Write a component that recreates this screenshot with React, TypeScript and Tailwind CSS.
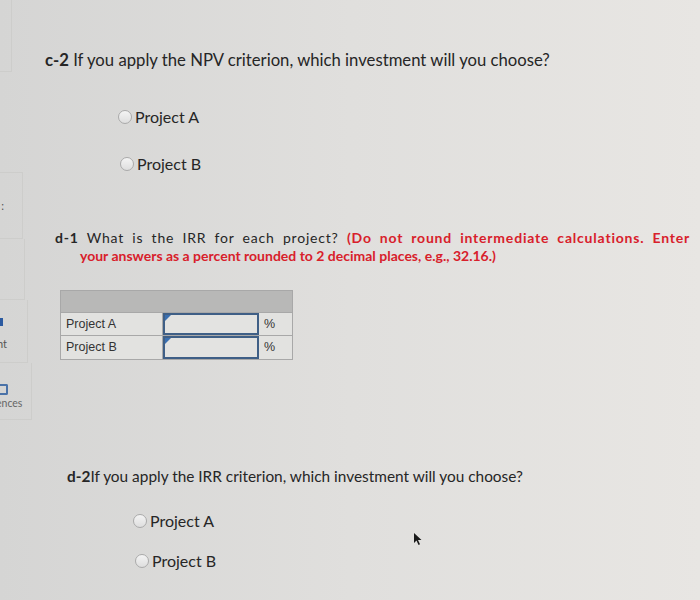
import React from 'react';

function Radio({ label, className }: { label: string; className?: string }) {
  return (
    <label className={`flex items-center gap-[3px] h-[20px] ${className ?? ''}`}>
      <span className="w-[14px] h-[14px] rounded-full border border-[#aaaaaa] bg-linear-to-b from-[#f4f4f4] to-[#dedede] flex-none" />
      <span className="text-[16px] text-[#262626]">{label}</span>
    </label>
  );
}

function IrrRow({ name, last }: { name: string; last?: boolean }) {
  return (
    <div className={`flex h-[23px] ${last ? '' : 'border-b border-[#a8a8a8]'}`}>
      <div className="w-[102px] border-r border-[#a8a8a8] px-[5px] flex items-center text-[12.5px] text-[#333]">
        {name}
      </div>
      <div className="relative w-[96px] border-2 border-[#3f5f86] bg-[#e3e3e1]">
        <span className="absolute left-0 top-0 w-0 h-0 border-t-[6px] border-r-[6px] border-t-[#3a6fb0] border-r-transparent" />
      </div>
      <div className="flex-1 flex items-center px-[5px] text-[12.5px] text-[#333]">%</div>
    </div>
  );
}

export default function App() {
  return (
    <div
      className="relative w-[700px] h-[600px] overflow-hidden flex bg-linear-to-r from-[#d5d5d4] via-[#e0dfdd] to-[#e8e6e3]"
      style={{ fontFamily: 'Lato, "Open Sans", sans-serif' }}
    >
      {/* partially visible left nav column */}
      <div className="flex-none w-[36px] flex flex-col text-[#555]">
        <div className="h-[72px] w-[12px] border-r border-b border-[#cdcdcb]" />
        <div className="h-[100px]" />
        <div className="h-[67px] w-[23px] border-r border-y border-[#cdcdcb] flex items-center justify-end pr-[18px]">
          <span className="text-[11px] leading-none">:</span>
        </div>
        <div className="h-[61px] w-[25px] border-r border-b border-[#cdcdcb]" />
        <div className="h-[63px] w-[28px] border-r border-b border-[#cdcdcb] flex flex-col pt-[18px] overflow-hidden">
          <div className="w-[3px] h-[8px] bg-[#2b5aa0]" />
          <div className="mt-[12px] text-[11px] leading-none -ml-[3px]">nt</div>
        </div>
        <div className="h-[57px] w-[32px] border-r border-b border-[#cdcdcb] flex flex-col pt-[21px] overflow-hidden">
          <div className="w-[8px] h-[11px] border-r-2 border-y-2 border-[#4a72a8] rounded-r-[2px]" />
          <div className="mt-[3px] text-[10.5px] leading-none -ml-[4px] text-[#666]">ences</div>
        </div>
      </div>

      <div className="flex-1 flex flex-col text-[#262626]">
        <p className="mt-[48px] ml-[9px] h-[24px] text-[16.7px] leading-[24px]">
          <b>c-2</b> If you apply the NPV criterion, which investment will you choose?
        </p>
        <Radio label="Project A" className="mt-[35px] ml-[82px]" />
        <Radio label="Project B" className="mt-[27px] ml-[84px]" />

        <div className="mt-[55px] ml-[19px] w-[635px] text-[14px] leading-[18px]">
          <p className="text-justify [text-align-last:justify] tracking-[0.8px]">
            <b>d-1</b> What is the IRR for each project?{' '}
            <b className="text-[#d8202b]">(Do not round intermediate calculations. Enter</b>
          </p>
          <p className="pl-[25px] font-bold text-[#d8202b]">
            your answers as a percent rounded to 2 decimal places, e.g., 32.16.)
          </p>
        </div>

        <div
          className="mt-[25px] ml-[24px] w-[233px] border border-[#a8a8a8] bg-[#e2e2e0]"
          style={{ fontFamily: '"Liberation Sans", Arial, sans-serif' }}
        >
          <div className="h-[22px] bg-[#b8b8b7] border-b border-[#a8a8a8]" />
          <IrrRow name="Project A" />
          <IrrRow name="Project B" last />
        </div>

        <p className="mt-[105px] ml-[31px] h-[22px] text-[15.4px] leading-[22px]">
          <b>d-2</b>If you apply the IRR criterion, which investment will you choose?
        </p>
        <Radio label="Project A" className="mt-[24px] ml-[97px]" />
        <Radio label="Project B" className="mt-[20px] ml-[99px]" />
      </div>

      {/* mouse pointer */}
      <svg className="absolute left-[413px] top-[532px]" width="10" height="14" viewBox="0 0 10 14">
        <path d="M1 1 L1 11 L3.5 8.5 L5.5 13 L7 12.3 L5 8 L8.5 8 Z" fill="#1a1a1a" />
      </svg>
    </div>
  );
}
